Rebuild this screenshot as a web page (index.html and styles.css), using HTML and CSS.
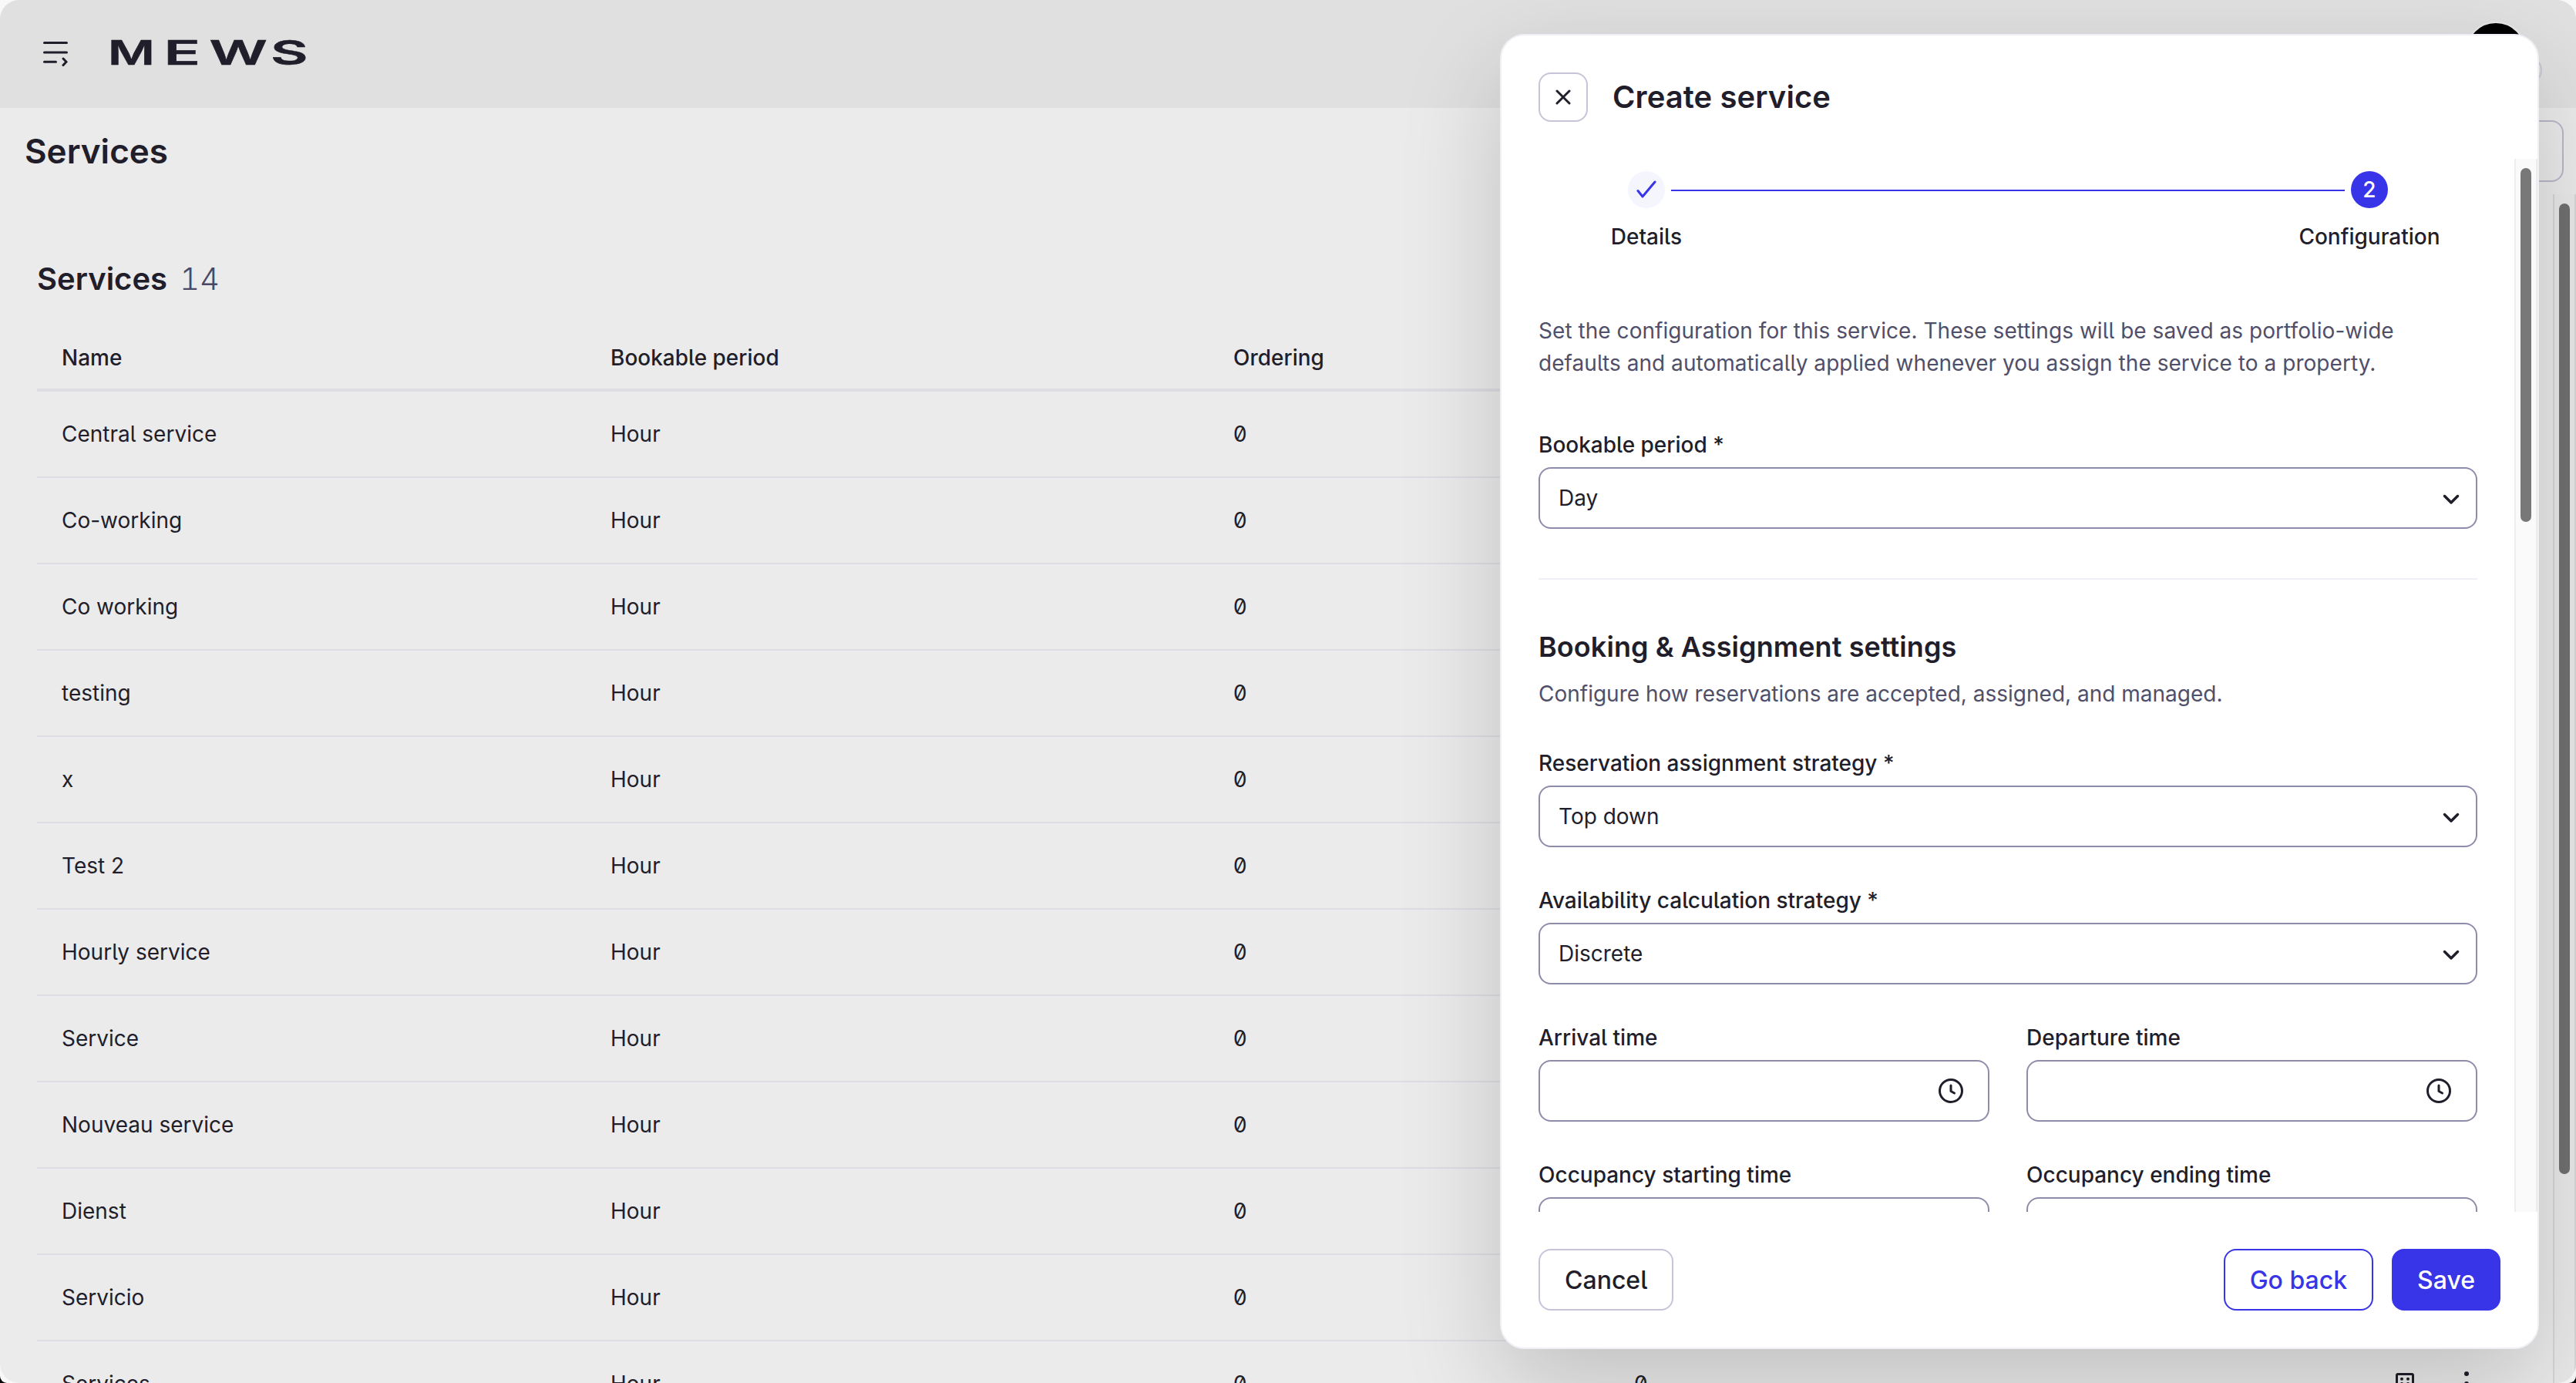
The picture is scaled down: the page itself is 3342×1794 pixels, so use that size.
FILE: index.html
```html
<!DOCTYPE html>
<html lang="en">
<head>
<meta charset="utf-8">
<title>Services</title>
<link rel="stylesheet" href="styles.css">
</head>
<body>
<svg class="defs" width="0" height="0" aria-hidden="true">
  <symbol id="chevron" viewBox="0 0 24 16"><path d="M3.5 3.5 12 12l8.500-8.500"/></symbol>
  <symbol id="clock" viewBox="0 0 32 32"><circle cx="16" cy="16" r="14.500"/><path d="M16 9v7.500l4.500 2.500"/></symbol>
</svg>
<div class="window">
  <header class="topbar">
    <svg class="menu-icon" viewBox="0 0 32 34"><path d="M1.500 3.500h29M1.500 16h29M1.500 28.300h15M26 24l4 4.300-4 4.300"/></svg>
    <svg class="logo" viewBox="0 0 260 34" aria-label="MEWS">
      <text transform="translate(0 33) scale(1.5 1)">M</text>
      <text transform="translate(72.400 33) scale(1.780 1)">E</text>
      <text transform="translate(131.500 33) scale(1.680 1)">W</text>
      <text transform="translate(211 33) scale(1.7 1)">S</text>
    </svg>
    <div class="avatar"><span class="avatar-badge"></span></div>
  </header>
  <div class="titlebar">
    <h1>Services</h1>
    <button class="page-action" aria-label="More"></button>
  </div>
  <main class="content">
    <section class="panel">
      <h2>Services <span class="count">14</span></h2>
      <div class="table">
        <div class="row head"><span>Name</span><span>Bookable period</span><span>Ordering</span></div>
        <div class="row"><span>Central service</span><span>Hour</span><span>0</span></div>
        <div class="row"><span>Co-working</span><span>Hour</span><span>0</span></div>
        <div class="row"><span>Co working</span><span>Hour</span><span>0</span></div>
        <div class="row"><span>testing</span><span>Hour</span><span>0</span></div>
        <div class="row"><span>x</span><span>Hour</span><span>0</span></div>
        <div class="row"><span>Test 2</span><span>Hour</span><span>0</span></div>
        <div class="row"><span>Hourly service</span><span>Hour</span><span>0</span></div>
        <div class="row"><span>Service</span><span>Hour</span><span>0</span></div>
        <div class="row"><span>Nouveau service</span><span>Hour</span><span>0</span></div>
        <div class="row"><span>Dienst</span><span>Hour</span><span>0</span></div>
        <div class="row"><span>Servicio</span><span>Hour</span><span>0</span></div>
        <div class="row"><span>Services</span><span>Hour</span><span>0</span><span>0</span>
          <span class="actions">
            <svg class="building" viewBox="0 0 24 32"><rect x="1.500" y="3.500" width="21" height="27" rx="1.500"/><path class="dots" d="M8 9.800h.01M16 9.800h.01M8 16h.01M16 16h.01"/></svg>
            <svg class="kebab" viewBox="0 0 8 32"><circle cx="4" cy="3" r="3"/><circle cx="4" cy="16" r="3"/><circle cx="4" cy="29" r="3"/></svg>
          </span>
        </div>
      </div>
    </section>
    <div class="scrollbar page-scroll"><div class="thumb"></div></div>
  </main>
</div>

<div class="modal" role="dialog">
  <div class="modal-head">
    <button class="close" aria-label="Close"><svg viewBox="0 0 20 20"><path d="M2 2l16 16M18 2 2 18"/></svg></button>
    <h2>Create service</h2>
  </div>
  <div class="modal-body">
    <div class="form">
      <div class="stepper">
        <div class="step">
          <span class="bullet done"><svg viewBox="0 0 28 28"><path d="M3 15.500 9 23 25 4"/></svg></span>
          <span>Details</span>
        </div>
        <div class="track"></div>
        <div class="step">
          <span class="bullet current">2</span>
          <span>Configuration</span>
        </div>
      </div>
      <p class="intro">Set the configuration for this service. These settings will be saved as portfolio-wide<br>defaults and automatically applied whenever you assign the service to a property.</p>
      <div class="field"><label>Bookable period *</label><div class="input">Day<svg class="chev"><use href="#chevron"/></svg></div></div>
      <hr>
      <h3>Booking &amp; Assignment settings</h3>
      <p class="hint">Configure how reservations are accepted, assigned, and managed.</p>
      <div class="fields">
        <div class="field wide"><label>Reservation assignment strategy *</label><div class="input">Top down<svg class="chev"><use href="#chevron"/></svg></div></div>
        <div class="field wide"><label>Availability calculation strategy *</label><div class="input">Discrete<svg class="chev"><use href="#chevron"/></svg></div></div>
        <div class="field"><label>Arrival time</label><div class="input time"><svg class="clk"><use href="#clock"/></svg></div></div>
        <div class="field"><label>Departure time</label><div class="input time"><svg class="clk"><use href="#clock"/></svg></div></div>
        <div class="field"><label>Occupancy starting time</label><div class="input time"><svg class="clk"><use href="#clock"/></svg></div></div>
        <div class="field"><label>Occupancy ending time</label><div class="input time"><svg class="clk"><use href="#clock"/></svg></div></div>
      </div>
    </div>
    <div class="scrollbar modal-scroll"><div class="thumb"></div></div>
  </div>
  <div class="modal-foot">
    <button class="btn">Cancel</button>
    <div class="foot-right">
      <button class="btn outline">Go back</button>
      <button class="btn primary">Save</button>
    </div>
  </div>
</div>
</body>
</html>
```
FILE: styles.css
```css
* { box-sizing: border-box; }
html { background: #000; }
body {
  margin: 0;
  width: 3342px;
  height: 1794px;
  overflow: hidden;
  position: relative;
  background: #f8f8f8;
  border-radius: 0 0 9px 9px;
  font-family: Inter, "Liberation Sans", sans-serif;
  font-feature-settings: "zero", "cv05";
  font-size: 28px;
  color: #1f1e2a;
}
h1, h2, h3, p { margin: 0; }
h1, h2, h3 { font-weight: 600; }
button { font: inherit; font-feature-settings: inherit; color: inherit; background: none; padding: 0; }
.defs { position: absolute; }

.window {
  height: 1794px;
  display: flex;
  flex-direction: column;
  background: #ebebeb;
  border-radius: 25px;
  overflow: hidden;
}
.topbar {
  flex: none;
  height: 140px;
  background: #e0e0e0;
  display: flex;
  align-items: flex-start;
  padding: 0 64px 0 56px;
}
.menu-icon { width: 32px; height: 34px; margin-top: 52px; fill: none; stroke: #1f1e2a; stroke-width: 3; stroke-linecap: round; }
.logo { width: 260px; height: 34px; margin: 51px 0 0 52px; overflow: visible; fill: #1f1e2a; stroke: #1f1e2a; stroke-width: .5; font-size: 44px; font-weight: 600; }
.avatar {
  position: relative;
  width: 80px;
  height: 80px;
  margin: 28px 0 0 auto;
  border-radius: 50%;
  border: 2px solid #e9e9e9;
  background: #000;
}
.avatar-badge {
  position: absolute;
  right: -22px;
  top: 43px;
  width: 36px;
  height: 36px;
  border-radius: 50%;
  border: 2px solid #c8c7d2;
  background: #e0e0e0;
}
.titlebar {
  flex: none;
  height: 112px;
  display: flex;
  align-items: center;
  justify-content: space-between;
  padding: 0 16px 0 32px;
}
.titlebar h1 { font-size: 44px; }
.page-action { width: 80px; height: 80px; border: 2px solid #b9b7ca; border-radius: 16px; }
.content { flex: 1; min-height: 0; display: flex; overflow: hidden; }
.panel { flex: 1; padding: 78px 48px 0; }
.panel h2 { font-size: 40px; line-height: 64px; }
.count { font-weight: 300; color: #4a4965; margin-left: 6px; font-feature-settings: "tnum"; }
.table { padding-top: 30px; }
.row {
  display: grid;
  grid-template-columns: 712px 808px 520px 1fr 156px;
  align-items: center;
  height: 112px;
  border-bottom: 2px solid #dddde3;
}
.row > span { padding-left: 32px; }
.row.head { height: 84px; border-bottom-width: 4px; font-weight: 500; }
.row .actions { display: flex; gap: 64px; padding: 0; }
.building { width: 24px; height: 32px; fill: none; stroke: #1f1e2a; stroke-width: 3; }
.building .dots { stroke-linecap: round; stroke-width: 4; }
.kebab { width: 8px; height: 32px; fill: #1f1e2a; }

.scrollbar { flex: none; width: 30px; padding: 12px 6px; border: 0 solid; border-width: 0 2px; }
.page-scroll { background: #e9e9e9; border-color: #d6d6d6; }
.page-scroll .thumb { height: 1259px; background: #707070; }
.thumb { width: 14px; border-radius: 7px; }

.modal {
  position: absolute;
  left: 1946px;
  top: 44px;
  width: 1348px;
  height: 1706px;
  display: flex;
  flex-direction: column;
  background: #fff;
  border: 2px solid #efeff5;
  border-radius: 32px;
  box-shadow: 0 48px 128px rgba(0, 0, 0, .18);
}
.modal-head { flex: none; height: 160px; display: flex; align-items: flex-start; gap: 32px; padding: 48px 48px 0; }
.modal-head h2 { font-size: 40px; line-height: 64px; letter-spacing: .08px; }
.close { width: 64px; height: 64px; border: 2px solid #c6c4d8; border-radius: 16px; display: grid; place-items: center; }
.close svg { width: 20px; height: 20px; fill: none; stroke: #1f1e2a; stroke-width: 3; stroke-linecap: round; }
.modal-body { flex: none; height: 1366px; display: flex; overflow: hidden; }
.form { flex: 1; padding: 16px 48px 0; }
.modal-scroll { background: #fafafa; border-color: #e8e8e8 #ededed; }
.modal-scroll .thumb { height: 459px; background: #787878; }

.stepper { display: flex; justify-content: space-between; padding-left: 50px; }
.step { width: 180px; display: flex; flex-direction: column; align-items: center; gap: 16px; line-height: 42px; font-weight: 500; white-space: nowrap; }
.step:last-child { width: 280px; }
.track { flex: 1; height: 2px; margin: 24px -108px 0 -58px; background: #3834e8; }
.bullet { width: 48px; height: 48px; border-radius: 50%; display: grid; place-items: center; }
.done { background: #f5f5fe; }
.done svg { width: 28px; height: 28px; fill: none; stroke: #3834e8; stroke-width: 3; stroke-linecap: round; stroke-linejoin: round; }
.current { background: #3834e8; color: #fff; }
.intro, .hint { color: #504f69; line-height: 42px; }
.intro { margin-top: 80px; letter-spacing: .045px; }
.field { display: flex; flex-direction: column; }
.field label { font-weight: 500; line-height: 42px; height: 50px; }
.intro + .field { margin-top: 64px; }
.input {
  height: 80px;
  border: 2px solid #8e8cab;
  border-radius: 16px;
  padding: 0 20px 0 24px;
  display: flex;
  align-items: center;
  justify-content: space-between;
}
.input.time { justify-content: flex-end; padding-right: 32px; }
.chev { width: 24px; height: 16px; margin-top: 4px; fill: none; stroke: #1f1e2a; stroke-width: 3.500; stroke-linecap: round; stroke-linejoin: round; }
.clk { width: 32px; height: 32px; fill: none; stroke: #1f1e2a; stroke-width: 3; stroke-linecap: round; stroke-linejoin: round; }
hr { margin: 64px 0 63px; border: 0; height: 2px; background: #efeff5; }
h3 { font-size: 36px; line-height: 48px; letter-spacing: .08px; }
.hint { margin-top: 16px; }
.fields { display: grid; grid-template-columns: 1fr 1fr; gap: 48px; margin-top: 48px; }
.wide { grid-column: span 2; }

.modal-foot { flex: 1; display: flex; justify-content: space-between; align-items: flex-start; padding: 48px 48px 0; }
.foot-right { display: flex; gap: 24px; }
.btn { height: 80px; padding: 0 32px; border: 2px solid #c6c4d8; border-radius: 16px; font-size: 32px; font-weight: 500; white-space: nowrap; }
.outline { border-color: #3834e8; color: #3834e8; }
.primary { padding: 0 31px; border-color: #3834e8; background: #3834e8; color: #fff; }
```
